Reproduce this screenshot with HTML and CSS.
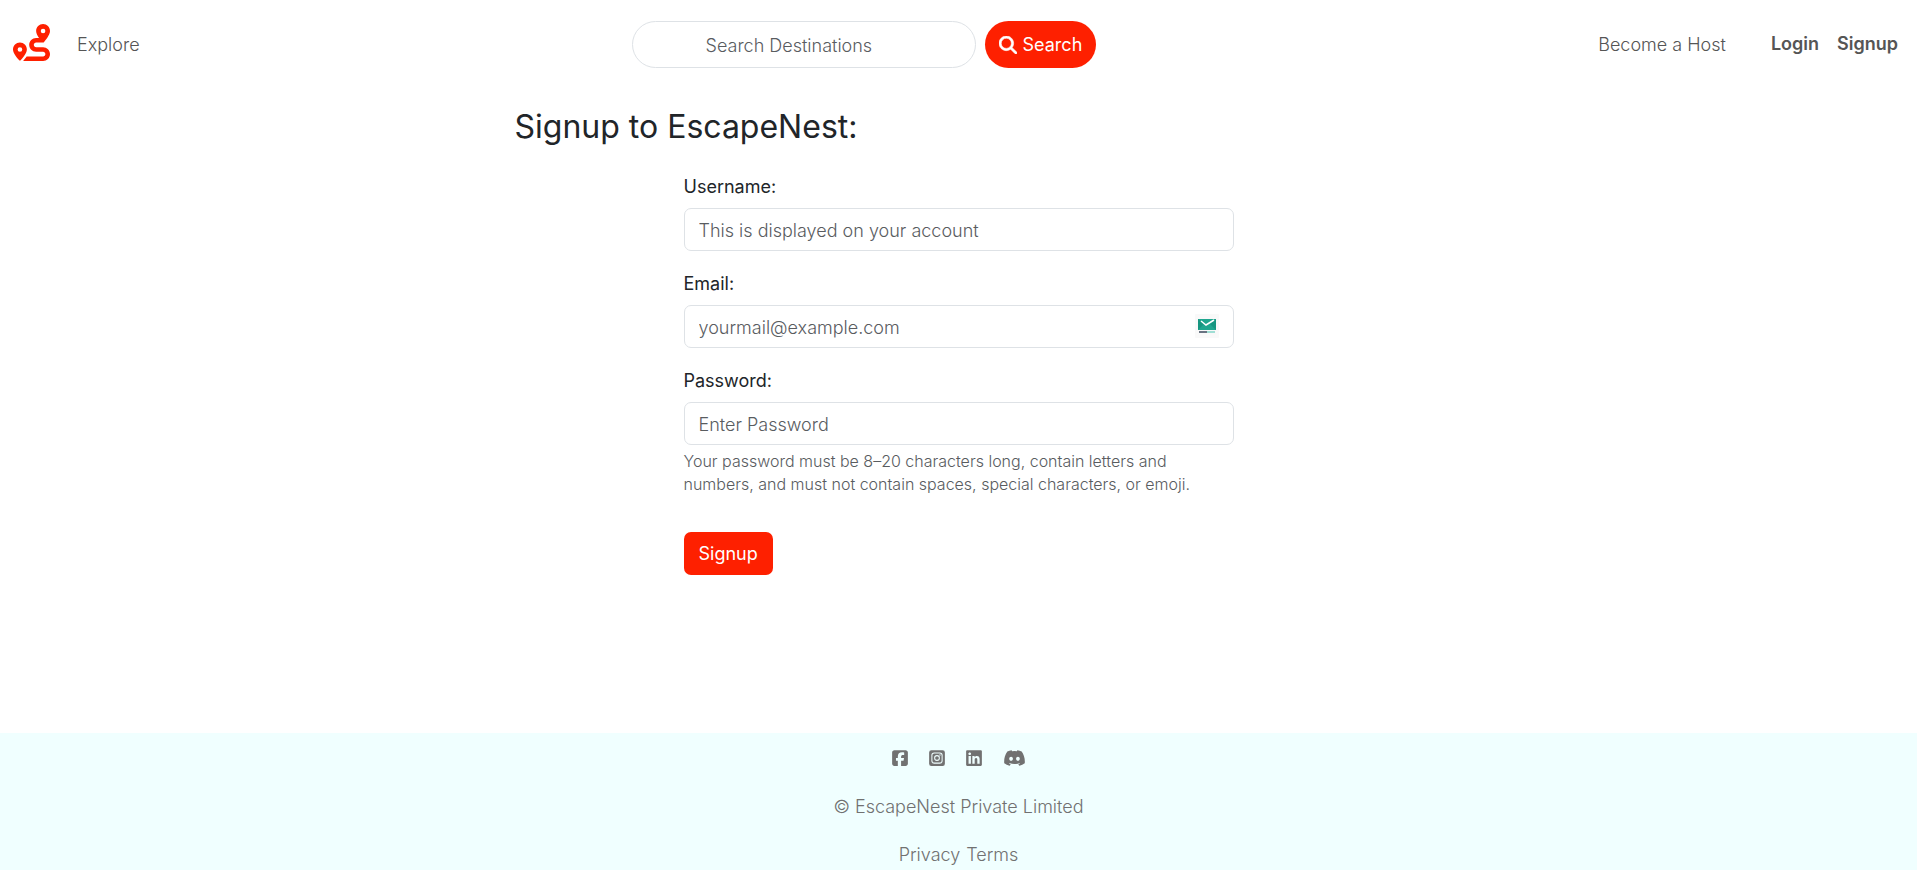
FILE: index.html
```html
<!DOCTYPE html>
<html lang="en">
<head>
<meta charset="utf-8">
<meta name="viewport" content="width=device-width, initial-scale=1">
<title>EscapeNest</title>
<link rel="stylesheet" href="styles.css">
</head>
<body>
<nav class="navbar">
  <a class="brand" href="#" aria-label="EscapeNest home">
    <svg class="brand-icon" viewBox="0 0 512 512" aria-hidden="true"><path d="M512 96c0 50.2-59.1 125.1-84.6 155c-3.8 4.4-9.4 6.1-14.5 5H320c-17.7 0-32 14.3-32 32s14.3 32 32 32h96c53 0 96 43 96 96s-43 96-96 96H139.6c8.7-9.9 19.3-22.6 30-36.8c6.3-8.4 12.8-17.6 19-27.2H416c17.7 0 32-14.3 32-32s-14.3-32-32-32H320c-53 0-96-43-96-96s43-96 96-96h39.8c-21-31.5-39.8-67.7-39.8-96c0-53 43-96 96-96s96 43 96 96zM117.1 489.1c-3.8 4.3-7.2 8.1-10.1 11.3l-1.8 2-.2-.2c-6 4.6-14.6 4-20-1.8C59.8 473 0 402.5 0 352c0-53 43-96 96-96s96 43 96 96c0 30-21.1 67-43.5 97.9c-10.7 14.7-21.7 28-30.8 38.5l-.6 .7zM128 352a32 32 0 1 0 -64 0 32 32 0 1 0 64 0zM416 128a32 32 0 1 0 0-64 32 32 0 1 0 0 64z"/></svg>
  </a>
  <a class="nav-link" href="#">Explore</a>
  <form class="search" role="search">
    <input class="search-input" type="search" placeholder="Search Destinations" aria-label="Search Destinations">
    <button class="search-button" type="button">
      <svg class="search-icon" viewBox="0 0 512 512" aria-hidden="true"><path d="M416 208c0 45.9-14.9 88.3-40 122.7L502.6 457.4c12.5 12.5 12.5 32.8 0 45.3s-32.8 12.5-45.3 0L330.7 376c-34.4 25.2-76.8 40-122.7 40C93.1 416 0 322.9 0 208S93.1 0 208 0S416 93.1 416 208zM208 352a144 144 0 1 0 0-288 144 144 0 1 0 0 288z"/></svg>
      Search
    </button>
  </form>
  <a class="nav-link host-link" href="#">Become a Host</a>
  <div class="account-links">
    <a class="nav-link strong" href="#">Login</a>
    <a class="nav-link strong" href="#">Signup</a>
  </div>
</nav>
<main class="content">
  <h1 class="title">Signup to EscapeNest:</h1>
  <form class="signup-form">
    <div class="field">
      <label for="username">Username:</label>
      <input class="control" id="username" type="text" placeholder="This is displayed on your account">
    </div>
    <div class="field">
      <label for="email">Email:</label>
      <div class="control-wrap">
        <input class="control" id="email" type="email" placeholder="yourmail@example.com">
        <svg class="mail-badge" viewBox="0 0 24 24" aria-hidden="true">
          <rect width="24" height="24" rx="1" fill="#f9f9f9"/>
          <rect x="3" y="5" width="18" height="11" fill="#20a68f"/>
          <path d="M3 5v11l6-6zM21 5v11l-6-6z" fill="#169580"/>
          <path d="M6 7l5 4 8-5" fill="none" stroke="#fff" stroke-width="1.5"/>
          <path d="M4 18h8" stroke="#39465a" stroke-width="1.5"/>
          <path d="M12 18h8" stroke="#82d5c7" stroke-width="1.5"/>
        </svg>
      </div>
    </div>
    <div class="field">
      <label for="password">Password:</label>
      <input class="control" id="password" type="password" placeholder="Enter Password" aria-describedby="password-help">
      <p class="help" id="password-help">Your password must be 8–20 characters long, contain letters and numbers, and must not contain spaces, special characters, or emoji.</p>
    </div>
    <button class="submit" type="button">Signup</button>
  </form>
</main>
<footer class="footer">
  <div class="social">
    <a href="#" aria-label="Facebook"><svg class="social-icon" viewBox="0 0 448 512"><path d="M64 32C28.7 32 0 60.7 0 96V416c0 35.3 28.7 64 64 64h98.2V334.2H109.4V256h52.8V222.3c0-87.1 39.4-127.5 125-127.5c16.2 0 44.2 3.2 55.7 6.4V172c-6-.6-16.5-1-29.6-1c-42 0-58.2 15.9-58.2 57.2V256h83.6l-14.4 78.2H255V480H384c35.3 0 64-28.7 64-64V96c0-35.3-28.7-64-64-64H64z"/></svg></a>
    <a href="#" aria-label="Instagram"><svg class="social-icon" viewBox="0 0 448 512"><path fill-rule="evenodd" d="M64 32h320a64 64 0 0 1 64 64v320a64 64 0 0 1-64 64H64a64 64 0 0 1-64-64V96a64 64 0 0 1 64-64zM144 96a80 80 0 0 0-80 80v160a80 80 0 0 0 80 80h160a80 80 0 0 0 80-80V176a80 80 0 0 0-80-80zM146 125h156a53 53 0 0 1 53 53v156a53 53 0 0 1-53 53H146a53 53 0 0 1-53-53V178a53 53 0 0 1 53-53zM224 174a82 82 0 1 0 0 164 82 82 0 1 0 0-164zM224 203a53 53 0 1 1 0 106 53 53 0 1 1 0-106zM309 152a19 19 0 1 0 0 38 19 19 0 1 0 0-38z"/></svg></a>
    <a href="#" aria-label="LinkedIn"><svg class="social-icon" viewBox="0 0 448 512"><path d="M416 32H31.9C14.3 32 0 46.5 0 64.3v383.4C0 465.5 14.3 480 31.9 480H416c17.6 0 32-14.5 32-32.3V64.3c0-17.8-14.4-32.3-32-32.3zM135.4 416H69V202.2h66.5V416zm-33.2-243c-21.3 0-38.5-17.3-38.5-38.5S80.9 96 102.2 96c21.2 0 38.5 17.3 38.5 38.5 0 21.3-17.2 38.5-38.5 38.5zm282.1 243h-66.4V312c0-24.8-.5-56.7-34.5-56.7-34.6 0-39.9 27-39.9 54.9V416h-66.4V202.2h63.7v29.2h.9c8.9-16.8 30.6-34.5 62.9-34.5 67.2 0 79.7 44.3 79.7 101.9V416z"/></svg></a>
    <a href="#" aria-label="Discord"><svg class="social-icon wide" viewBox="0 0 640 512"><path d="M524.531,69.836a1.5,1.5,0,0,0-.764-.7A485.065,485.065,0,0,0,404.081,32.03a1.816,1.816,0,0,0-1.923.91,337.461,337.461,0,0,0-14.9,30.6,447.848,447.848,0,0,0-134.426,0,309.541,309.541,0,0,0-15.135-30.6,1.89,1.89,0,0,0-1.924-.91A483.689,483.689,0,0,0,116.085,69.137a1.712,1.712,0,0,0-.788.676C39.068,183.651,18.186,294.69,28.43,404.354a2.016,2.016,0,0,0,.765,1.375A487.666,487.666,0,0,0,176.02,479.918a1.9,1.9,0,0,0,2.063-.676A348.2,348.2,0,0,0,208.12,430.4a1.86,1.86,0,0,0-1.019-2.588,321.173,321.173,0,0,1-45.868-21.853,1.885,1.885,0,0,1-.185-3.126c3.082-2.309,6.166-4.711,9.109-7.137a1.819,1.819,0,0,1,1.9-.256c96.229,43.917,200.41,43.917,295.5,0a1.812,1.812,0,0,1,1.924.233c2.944,2.426,6.027,4.851,9.132,7.16a1.884,1.884,0,0,1-.162,3.126,301.407,301.407,0,0,1-45.89,21.83,1.875,1.875,0,0,0-1,2.611,391.055,391.055,0,0,0,30.014,48.815,1.864,1.864,0,0,0,2.063.7A486.048,486.048,0,0,0,610.7,405.729a1.882,1.882,0,0,0,.765-1.352C623.729,277.594,590.933,167.465,524.531,69.836ZM222.491,337.58c-28.972,0-52.844-26.587-52.844-59.239S193.056,219.1,222.491,219.1c29.665,0,53.306,26.82,52.843,59.239C275.334,310.993,251.924,337.58,222.491,337.58Zm195.38,0c-28.971,0-52.843-26.587-52.843-59.239S388.437,219.1,417.871,219.1c29.667,0,53.307,26.82,52.844,59.239C470.715,310.993,447.538,337.58,417.871,337.58Z"/></svg></a>
  </div>
  <p class="copyright">© EscapeNest Private Limited</p>
  <div class="legal"><a href="#">Privacy</a><a href="#">Terms</a></div>
</footer>
</body>
</html>
```
FILE: styles.css
```css
* { box-sizing: border-box; }

body {
  display: flex;
  flex-direction: column;
  min-height: 100vh;
  margin: 0;
  background: #fff;
  color: #212529;
  font: 300 18px/26px Inter, "Open Sans", sans-serif;
}

a { color: inherit; text-decoration: none; }
input, button { font: inherit; }
p { margin: 0; }
svg { display: block; fill: currentColor; }

.navbar {
  display: flex;
  align-items: center;
  min-height: 88px;
  padding: 0 19px 0 13px;
  color: #555;
}
.nav-link { padding-top: 2px; }
.brand { margin-right: 27px; color: #fe2000; }
.brand-icon { width: 37px; height: 37px; margin-bottom: 4px; }
.search { display: flex; gap: 9px; margin: 0 auto; }
.search-input {
  width: 344px;
  height: 47px;
  padding: 2px 13px 0 73px;
  border: 1px solid #dee2e6;
  border-radius: 25px;
  background: #fff;
  color: #212529;
}
.search-button {
  display: flex;
  align-items: center;
  gap: 6px;
  height: 47px;
  padding: 2px 14px 0;
  border: 0;
  border-radius: 25px;
  background: #fe2000;
  color: #fff;
  font-weight: 400;
}
.search-icon { width: 18px; height: 18px; stroke: currentColor; stroke-width: 16; }
.host-link { padding-left: 10px; margin-right: 45px; }
.account-links { display: flex; gap: 18px; }
.strong { padding-top: 0; font-weight: 600; }

.content {
  flex: 1;
  width: 100%;
  max-width: 888px;
  margin: 0 auto;
  padding-top: 20px;
}
.title { margin: 0 0 29px; font-size: 32px; line-height: 37px; font-weight: 400; }
.signup-form { max-width: 550px; margin: 0 auto; }
.field { margin-bottom: 20px; }
label { display: block; margin-bottom: 8px; font-weight: 400; }
.control {
  display: block;
  width: 100%;
  height: 43px;
  padding: 1px 14px 0;
  border: 1px solid #dee2e6;
  border-radius: 7px;
  background: #fff;
  color: #212529;
}
::placeholder { color: #595c5f; opacity: 1; }
.control-wrap { position: relative; }
.mail-badge { position: absolute; top: 9px; right: 15px; width: 24px; height: 24px; }
.help { margin-top: 5px; color: #595c5f; font-size: 16px; line-height: 23px; }
.submit {
  height: 43px;
  margin-top: 16px;
  padding: 1px 15px 0;
  border: 0;
  border-radius: 7px;
  background: #fe2000;
  color: #fff;
  font-weight: 400;
}

.footer {
  display: flex;
  flex-direction: column;
  align-items: center;
  padding: 16px 0 2px;
  background: #f0ffff;
  color: #717171;
}
.social { display: flex; gap: 21px; margin-bottom: 27px; }
.social-icon { width: 16px; height: 18px; }
.social-icon.wide { width: 23px; }
.copyright { margin-bottom: 22px; }
.legal { display: flex; gap: 6px; }
```
